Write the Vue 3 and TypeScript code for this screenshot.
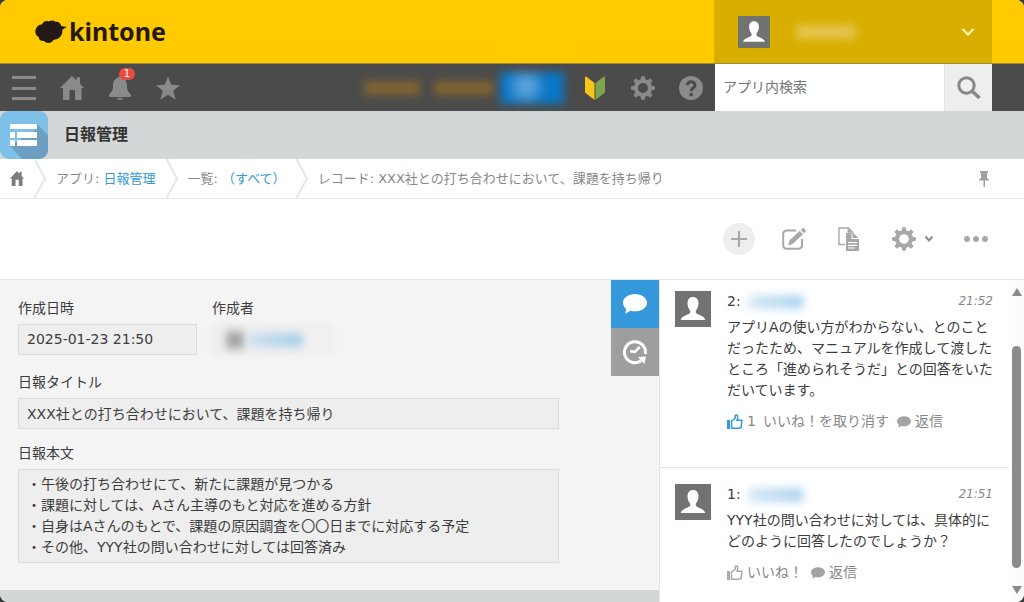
<script setup lang="ts">
import { ref } from 'vue'

interface Comment {
  id: number
  time: string
  body: string
  liked: boolean
  likes: number
}

const comments: Comment[] = [
  {
    id: 2,
    time: '21:52',
    body: 'アプリAの使い方がわからない、とのことだったため、マニュアルを作成して渡したところ「進められそうだ」との回答をいただいています。',
    liked: true,
    likes: 1,
  },
  {
    id: 1,
    time: '21:51',
    body: 'YYY社の問い合わせに対しては、具体的にどのように回答したのでしょうか？',
    liked: false,
    likes: 0,
  },
]

const keyword = ref('')
const report = {
  createdAt: '2025-01-23 21:50',
  title: 'XXX社との打ち合わせにおいて、課題を持ち帰り',
  body: [
    '・午後の打ち合わせにて、新たに課題が見つかる',
    '・課題に対しては、Aさん主導のもと対応を進める方針',
    '・自身はAさんのもとで、課題の原因調査を〇〇日までに対応する予定',
    '・その他、YYY社の問い合わせに対しては回答済み',
  ].join('\n'),
}

// Outline of an eight-toothed gear centred on (12, 12), with a round hole.
function gear(outer: number, root: number, hole: number): string {
  const points: string[] = []
  for (let i = 0; i < 8; i++) {
    const base = (i * Math.PI) / 4
    const corners: [number, number][] = [
      [root, -0.24],
      [outer, -0.15],
      [outer, 0.15],
      [root, 0.24],
    ]
    for (const [r, a] of corners) {
      points.push(`${(12 + r * Math.sin(base + a)).toFixed(2)} ${(12 - r * Math.cos(base + a)).toFixed(2)}`)
    }
  }
  return `M${points.join('L')}ZM${12 - hole} 12a${hole} ${hole} 0 1 0 ${hole * 2} 0a${hole} ${hole} 0 1 0 ${-hole * 2} 0Z`
}

const navGear = gear(12, 9, 5)
const toolGear = gear(12, 9, 4.8)
</script>

<template>
  <div class="page">
    <header class="brand-bar">
      <a class="logo" href="#" aria-label="kintone">
        <svg width="32" height="24" viewBox="0 0 32 24" aria-hidden="true">
          <path
            d="M7 4.500C8 1.500 11 .2 13.500 1.400C16 -.2 19 .2 20.500 1.800C23.500 1.300 26 3.500 26.300 6C28 6.600 30 6.700 32 6.800C30.500 8 29 8.800 27.300 9.800C27.800 12.500 27 15.500 24.500 17.500C23 19 20.500 19.500 18.500 20C16.500 23.500 11.500 24 9 21C6 21.500 4 19.700 3.600 17C0 15.500 -.5 10.500 1.500 7.700C2.500 5.300 5 4 7 4.500Z"
            fill="#231815"
          />
        </svg>
        <span>kintone</span>
      </a>
      <button class="account" type="button" aria-label="アカウント">
        <svg class="avatar avatar-small" viewBox="0 0 36 36" aria-hidden="true">
          <rect width="36" height="36" fill="#717371" />
          <path d="M18 6c3.500 0 5.500 2.600 5.500 6.200c0 3-1.200 5.800-2.700 7.200v2.400c1.500 2.200 8.500 2.700 9.500 7.200H5.700c1-4.500 8-5 9.500-7.200v-2.400c-1.500-1.400-2.700-4.200-2.700-7.200C12.500 8.600 14.500 6 18 6Z" fill="#fff" />
        </svg>
        <span class="smudge account-name"></span>
        <svg class="account-arrow" width="14" height="10" viewBox="0 0 14 10" aria-hidden="true">
          <path d="M1.500 2L7 7.500L12.500 2" fill="none" stroke="#fff3c8" stroke-width="2" />
        </svg>
      </button>
    </header>

    <nav class="nav-bar">
      <button class="nav-item" type="button" aria-label="メニュー">
        <svg width="24" height="24" viewBox="0 0 24 24"><path d="M0 0h24v3H0zM0 11h24v3H0zM0 21h24v3H0z" /></svg>
      </button>
      <button class="nav-item" type="button" aria-label="ポータル">
        <svg width="24" height="24" viewBox="0 0 24 24"><path d="M12 0L16.500 4.500V1.200H20V8L24 12H21.500V24H15V14H9.500V24H3V12H0Z" /></svg>
      </button>
      <button class="nav-item" type="button" aria-label="通知 1件">
        <svg width="24" height="24" viewBox="0 0 24 24"><path d="M12 0c1.300 0 2 .8 2 1.800C18 3 19 6.500 19 10c0 5 2 6.500 3.800 8.500C23.500 19.500 23 21 21.500 21H2.500C1 21 .5 19.500 1.200 18.500C3 16.500 5 15 5 10C5 6.500 6 3 10 1.800C10 .8 10.700 0 12 0ZM9 22h6c-.5 1.300-1.600 2-3 2s-2.500-.7-3-2Z" /></svg>
        <span class="badge">1</span>
      </button>
      <button class="nav-item" type="button" aria-label="お気に入り">
        <svg width="24" height="24" viewBox="0 0 24 24"><path d="M12 .5L15.200 8.800L24 9.300L17.200 14.800L19.500 23.500L12 18.700L4.500 23.500L6.800 14.800L0 9.300L8.800 8.800Z" /></svg>
      </button>
      <div class="trial">
        <span class="smudge trial-a"></span>
        <span class="smudge trial-b"></span>
        <button class="smudge purchase" type="button" aria-label="購入"></button>
      </div>
      <button class="nav-item" type="button" aria-label="はじめてガイド">
        <svg width="24" height="24" viewBox="0 0 24 24">
          <path d="M2 1.500Q2 0 3.500 .7L11.500 7V24L2 16.500Z" fill="#f6c719" />
          <path d="M22 1.500Q22 0 20.500 .7L12.500 7V24L22 16.500Z" fill="#7da64c" />
        </svg>
      </button>
      <button class="nav-item" type="button" aria-label="設定">
        <svg width="24" height="24" viewBox="0 0 24 24"><path :d="navGear" fill-rule="evenodd" /></svg>
      </button>
      <button class="nav-item" type="button" aria-label="ヘルプ">
        <svg width="24" height="24" viewBox="0 0 24 24">
          <circle cx="12" cy="12" r="12" />
          <path d="M8.300 9.300C8.300 4.300 16 4.700 16 9.200C16 12 12.200 12 12.200 15.300" fill="none" stroke="#4b4b4b" stroke-width="3" />
          <path d="M10.500 17h3.200v3.200h-3.200z" fill="#4b4b4b" />
        </svg>
      </button>
      <form class="search" role="search" @submit.prevent>
        <input v-model="keyword" type="text" placeholder="アプリ内検索" aria-label="アプリ内検索" />
        <button type="submit" aria-label="検索">
          <svg width="24" height="24" viewBox="0 0 24 24">
            <circle cx="9.500" cy="9.500" r="7.700" fill="none" stroke="#888" stroke-width="3" />
            <path d="M15 15L22.500 22" stroke="#888" stroke-width="3.600" />
          </svg>
        </button>
      </form>
    </nav>

    <div class="app-bar">
      <svg class="app-icon" width="48" height="48" viewBox="0 0 48 48" aria-hidden="true">
        <defs>
          <clipPath id="app-shape"><rect width="48" height="48" rx="9" /></clipPath>
        </defs>
        <g clip-path="url(#app-shape)">
          <rect width="48" height="48" fill="#7fc0e8" />
          <path d="M37 13L50 26V50H24L10 35L37 18Z" fill="#6c9fc1" />
        </g>
        <path d="M10 13h27v5H10zM10 21h5v6h-5zM17 21h20v6H17zM10 29h5v6h-5zM17 29h20v6H17z" fill="#fff" />
      </svg>
      <h1>日報管理</h1>
    </div>

    <nav class="crumbs" aria-label="パンくずリスト">
      <a class="crumb-home" href="#" aria-label="ポータル">
        <svg width="14" height="15" viewBox="0 0 24 24" preserveAspectRatio="none"><path d="M12 0L16.500 4.500V1.200H20V8L24 12H21.500V24H15V14H9.500V24H3V12H0Z" fill="#7d7d7d" /></svg>
      </a>
      <svg class="crumb-sep" width="12" height="39" viewBox="0 0 12 39"><path d="M.5 0L11 19.500L.5 39" /></svg>
      <span>アプリ: <a href="#">日報管理</a></span>
      <svg class="crumb-sep" width="12" height="39" viewBox="0 0 12 39"><path d="M.5 0L11 19.500L.5 39" /></svg>
      <span>一覧: <a href="#">（すべて）</a></span>
      <svg class="crumb-sep" width="12" height="39" viewBox="0 0 12 39"><path d="M.5 0L11 19.500L.5 39" /></svg>
      <span>レコード: {{ report.title }}</span>
      <button class="pin" type="button" aria-label="固定">
        <svg width="10" height="16" viewBox="0 0 10 16"><path d="M1 0h8v2H8v5c1.300.4 2 1.300 2 2.500H6V16H4.500V9.500H0C0 8.300.7 7.400 2 7V2H1z" fill="#a0a0a0" /></svg>
      </button>
    </nav>

    <div class="toolbar">
      <button class="add" type="button" aria-label="レコードを追加する">
        <svg width="16" height="16" viewBox="0 0 16 16"><path d="M7 0h2v7h7v2H9v7H7V9H0V7h7z" /></svg>
      </button>
      <button type="button" aria-label="レコードを編集する">
        <svg width="24" height="24" viewBox="0 0 24 24">
          <path d="M14 3.500H5Q1.200 3.500 1.200 7.300V18Q1.200 21.800 5 21.800H16.200Q20 21.800 20 18V12" fill="none" stroke="#a8a8a8" stroke-width="2" />
          <path d="M6 18.500L7.600 13.200L17.800 3.800L21 7.200L10.900 16.800ZM18.800 2.800L20.700 1Q21.300.6 21.900 1.200L23.800 3.200Q24.200 3.800 23.700 4.400L22 6.200Z" />
        </svg>
      </button>
      <button class="copy" type="button" aria-label="レコードを再利用する">
        <svg width="22" height="24" viewBox="0 0 22 24">
          <path d="M7 17.500H1V1H10.500L14.500 5V7" fill="none" stroke="#a8a8a8" stroke-width="1.400" />
          <path d="M8 6h5.500v6h7.500v12H8zM9.500.8v5h4.500zM14.500 5.500L20.500 11h-6z" />
          <path d="M10 15.500h9M10 18.300h9M10 21h7" stroke="#fff" stroke-width="1.200" />
        </svg>
      </button>
      <button class="options" type="button" aria-label="アプリの設定">
        <svg width="24" height="24" viewBox="0 0 24 24"><path :d="toolGear" fill-rule="evenodd" /></svg>
        <svg width="10" height="8" viewBox="0 0 10 8"><path d="M1.500 1.500L5 5.500L8.500 1.500" fill="none" stroke="#8b8b8b" stroke-width="2" /></svg>
      </button>
      <button type="button" aria-label="その他">
        <svg width="24" height="8" viewBox="0 0 24 8"><circle cx="3" cy="4" r="3" /><circle cx="12" cy="4" r="3" /><circle cx="21" cy="4" r="3" /></svg>
      </button>
    </div>

    <main class="content">
      <section class="record">
        <div class="record-form">
          <div class="fields">
            <div class="row">
              <div class="field">
                <label for="created-at">作成日時</label>
                <input id="created-at" class="created" type="text" :value="report.createdAt" readonly />
              </div>
              <div class="field">
                <span>作成者</span>
                <div class="creator">
                  <span class="smudge creator-icon"></span>
                  <span class="smudge creator-name"></span>
                </div>
              </div>
            </div>
            <div class="field">
              <label for="report-title">日報タイトル</label>
              <input id="report-title" type="text" :value="report.title" readonly />
            </div>
            <div class="field">
              <label for="report-body">日報本文</label>
              <textarea id="report-body" rows="4" :value="report.body" readonly></textarea>
            </div>
          </div>
          <div class="tabs">
            <button class="tab tab-active" type="button" aria-label="コメント">
              <svg width="24" height="20" viewBox="0 0 24 20"><path d="M12 0c6.600 0 12 3.800 12 8.700s-5.400 8.600-12 8.600c-1.700 0-3.300-.2-4.700-.6L2.300 19.700L3.200 14.900C1.200 13.400 0 11.200 0 8.700C0 3.800 5.400 0 12 0Z" fill="#fff" /></svg>
            </button>
            <button class="tab" type="button" aria-label="変更履歴">
              <svg width="24" height="26" viewBox="0 0 24 26">
                <path d="M22.300 15A10.500 10.500 0 1 0 18 21.800" fill="none" stroke="#fff" stroke-width="3" />
                <path d="M15 18L23 17.500L21.300 25Z" fill="#fff" />
                <path d="M7 12.300L11.800 12.800L16.800 7.800" fill="none" stroke="#fff" stroke-width="2.600" />
              </svg>
            </button>
          </div>
        </div>
        <div class="record-foot"></div>
      </section>

      <aside class="side">
        <div class="comments">
          <article v-for="c in comments" :key="c.id" class="comment">
            <svg class="avatar" viewBox="0 0 36 36" aria-hidden="true">
              <rect width="36" height="36" fill="#717371" />
              <path d="M18 6c3.500 0 5.500 2.600 5.500 6.200c0 3-1.200 5.800-2.700 7.200v2.400c1.500 2.200 8.500 2.700 9.500 7.200H5.700c1-4.500 8-5 9.500-7.200v-2.400c-1.500-1.400-2.700-4.200-2.700-7.200C12.500 8.600 14.500 6 18 6Z" fill="#fff" />
            </svg>
            <div class="comment-main">
              <div class="comment-head">
                <span>{{ c.id }}:</span>
                <span class="smudge comment-name"></span>
                <time>{{ c.time }}</time>
              </div>
              <p>{{ c.body }}</p>
              <div class="actions">
                <button type="button" class="like" :class="{ liked: c.liked }">
                  <svg width="16" height="16" viewBox="0 0 16 16">
                    <path d="M0 6h3v9H0z" fill="currentColor" />
                    <path d="M4.500 13.800V7L8 4.500L8.300 1.300H10.300L10.800 3.500L10 6.300H14.800L14.200 13.200L12.500 14.200H6Z" fill="none" stroke="currentColor" stroke-width="1.500" />
                  </svg>
                  <span v-if="c.likes" class="count">{{ c.likes }}</span>
                  <span>{{ c.liked ? 'いいね！を取り消す' : 'いいね！' }}</span>
                </button>
                <button type="button" class="reply">
                  <svg width="14" height="12" viewBox="0 0 24 20"><path d="M12 0c6.600 0 12 3.800 12 8.700s-5.400 8.600-12 8.600c-1.700 0-3.300-.2-4.700-.6L2.300 19.700L3.200 14.900C1.200 13.400 0 11.200 0 8.700C0 3.800 5.400 0 12 0Z" fill="#a3a3a3" /></svg>
                  <span>返信</span>
                </button>
              </div>
            </div>
          </article>
        </div>
        <div class="scrollbar" aria-hidden="true">
          <svg width="10" height="8" viewBox="0 0 10 8"><path d="M5 0L10 8H0Z" /></svg>
          <div class="track"><div class="thumb"></div></div>
          <svg width="10" height="8" viewBox="0 0 10 8"><path d="M0 0H10L5 8Z" /></svg>
        </div>
      </aside>
    </main>
  </div>
</template>

<style>
html {
  background: #383838;
}
body {
  margin: 0;
}
</style>

<style scoped>
.page {
  display: flex;
  flex-direction: column;
  height: 100vh;
  min-height: 600px;
  overflow: hidden;
  border-radius: 8px;
  background: #fff;
  color: #3c3c3c;
  font-family: "DejaVu Sans", "Noto Sans CJK JP", sans-serif;
  font-size: 14px;
  line-height: 21px;
}
.page *,
.page {
  box-sizing: border-box;
}
button,
input,
textarea {
  margin: 0;
  padding: 0;
  border: 0;
  background: none;
  color: inherit;
  font: inherit;
}
button {
  display: flex;
  align-items: center;
  justify-content: center;
  cursor: pointer;
}
a {
  color: #3498db;
  text-decoration: none;
}
svg {
  flex: none;
}
.smudge {
  flex: none;
  filter: blur(4px);
}

.brand-bar {
  display: flex;
  flex: none;
  justify-content: space-between;
  height: 64px;
  padding: 0 32px 0 35px;
  border-bottom: 1px solid #a08c35;
  background: #ffcb00;
}
.logo {
  display: flex;
  align-items: center;
  gap: 2px;
  color: #231815;
  font-family: "Noto Sans", sans-serif;
  font-size: 25px;
  font-weight: 700;
}
.account {
  width: 278px;
  padding: 0 17px 0 24px;
  background: #d8ae00;
}
.avatar {
  flex: none;
  width: 36px;
  height: 36px;
}
.avatar-small {
  width: 32px;
  height: 32px;
}
.account-name {
  width: 60px;
  height: 14px;
  margin-left: 26px;
  background: #e5c64f;
}
.account-arrow {
  margin-left: auto;
}

.nav-bar {
  display: flex;
  flex: none;
  height: 47px;
  padding-right: 32px;
  background: #4b4b4b;
}
.nav-item {
  position: relative;
  width: 48px;
  fill: #8a8a8a;
}
.badge {
  position: absolute;
  top: 4px;
  right: 9px;
  width: 16px;
  border-radius: 6px;
  background: #e74c3c;
  color: #fff;
  font-size: 10px;
  line-height: 12px;
}
.trial {
  display: flex;
  flex: 1;
  align-items: center;
  justify-content: flex-end;
  padding-right: 7px;
}
.trial-a,
.trial-b {
  height: 14px;
  background: #806533;
}
.trial-a {
  width: 56px;
  margin-right: 14px;
}
.trial-b {
  width: 60px;
  margin-right: 6px;
}
.purchase {
  width: 64px;
  height: 32px;
  background: radial-gradient(circle at 26px 14px, #65aade 2px, #3a8fd0 12px, #0876c5 22px);
}
.search {
  display: flex;
  width: 277px;
  background: #fff;
}
.search input {
  flex: 1;
  min-width: 0;
  padding: 0 8px;
}
.search input::placeholder {
  color: #757575;
  opacity: 1;
}
.search button {
  width: 48px;
  border-left: 1px solid #e3e3e3;
  background: #eee;
}

.app-bar {
  display: flex;
  flex: none;
  align-items: center;
  gap: 16px;
  height: 48px;
  background: #d3d7d8;
}
h1 {
  margin: 0;
  color: #333;
  font-size: 16px;
  line-height: 24px;
}

.crumbs {
  display: flex;
  flex: none;
  align-items: center;
  height: 40px;
  padding: 0 32px 0 10px;
  border-bottom: 1px solid #e3e8e8;
  color: #888;
  font-size: 13px;
  white-space: nowrap;
}
.crumb-home {
  display: flex;
}
.crumb-sep {
  margin: 0 10px;
  fill: none;
  stroke: #e3e8e8;
  stroke-width: 2;
}
.pin {
  width: 16px;
  margin-left: auto;
}

.toolbar {
  display: flex;
  flex: none;
  align-items: center;
  justify-content: flex-end;
  height: 81px;
  padding: 0 36px;
  border-bottom: 1px solid #e3e7e8;
}
.toolbar button {
  min-height: 32px;
  margin-left: 30px;
  fill: #a8a8a8;
}
.toolbar .add {
  width: 32px;
  margin: 0 -3px 0 0;
  border-radius: 50%;
  background: #eee;
}
.toolbar .copy {
  margin-left: 32px;
}
.toolbar .options {
  gap: 8px;
  margin-left: 32px;
}

.content {
  display: flex;
  flex: 1;
  min-height: 0;
}
.record {
  display: flex;
  flex: 1;
  flex-direction: column;
  min-width: 0;
}
.record-form {
  display: flex;
  flex: 1;
  justify-content: space-between;
  background: #f4f4f4;
}
.record-foot {
  height: 12px;
  background: #d3d7d8;
}
.fields {
  display: flex;
  flex: 1;
  flex-direction: column;
  gap: 14px;
  max-width: 559px;
  padding: 18px 0 0 18px;
}
.row {
  display: flex;
  gap: 15px;
  margin-bottom: 3px;
}
.field {
  display: flex;
  flex-direction: column;
  gap: 5px;
}
.field input,
.field textarea {
  display: block;
  width: 100%;
  padding: 4px 8px;
  border: 1px solid #dcdcdc;
  background: #eee;
  line-height: 21px;
  resize: none;
  overflow: hidden;
}
.field input {
  height: 31px;
  padding: 3px 8px 5px;
}
.field .created {
  width: 179px;
}
.creator {
  display: flex;
  align-items: center;
  gap: 4px;
  width: 122px;
  height: 31px;
  padding-left: 14px;
  background: #f0f0f0;
  box-shadow: 0 0 6px #f0f0f0;
}
.creator-icon {
  width: 18px;
  height: 18px;
  background: #a4a6a4;
}
.creator-name {
  width: 54px;
  height: 14px;
  background: linear-gradient(90deg, #cfe0ed, #a3cdec);
}
.tab {
  width: 48px;
  height: 48px;
  background: #9e9e9e;
}
.tab-active {
  background: #3498db;
}

.side {
  display: flex;
  flex: none;
  width: 365px;
  border-left: 1px solid #e3e7e8;
}
.comments {
  flex: 1;
  min-width: 0;
  overflow: hidden;
}
.comment {
  display: flex;
  gap: 16px;
  padding: 16px 14px 35px 15px;
  border-bottom: 1px solid #e3e7e8;
}
.comment:first-child {
  padding-top: 11px;
}
.comment-main {
  flex: 1;
  min-width: 0;
}
.comment-head {
  display: flex;
  align-items: center;
  gap: 8px;
}
.comment-name {
  width: 54px;
  height: 14px;
  background: linear-gradient(90deg, #d5e7f5, #add4f0);
}
time {
  margin-left: auto;
  padding-right: 2px;
  color: #888;
  font-size: 12px;
  font-style: italic;
}
p {
  margin: 5px 0 10px;
}
.actions {
  display: flex;
  gap: 8px;
  color: #888;
}
.actions button {
  gap: 4px;
}
.like svg {
  color: #aaa;
}
.liked svg {
  color: #3498db;
}
.count {
  margin-right: 3px;
}
.scrollbar {
  display: flex;
  flex-direction: column;
  align-items: center;
  width: 15px;
  padding: 8px 0;
  background: #fcfcfc;
  fill: #8b8b8b;
}
.track {
  display: flex;
  flex: 1;
  justify-content: center;
  width: 100%;
  padding: 50px 0 18px;
}
.thumb {
  width: 9px;
  border-radius: 5px;
  background: #8b8b8b;
}
</style>
